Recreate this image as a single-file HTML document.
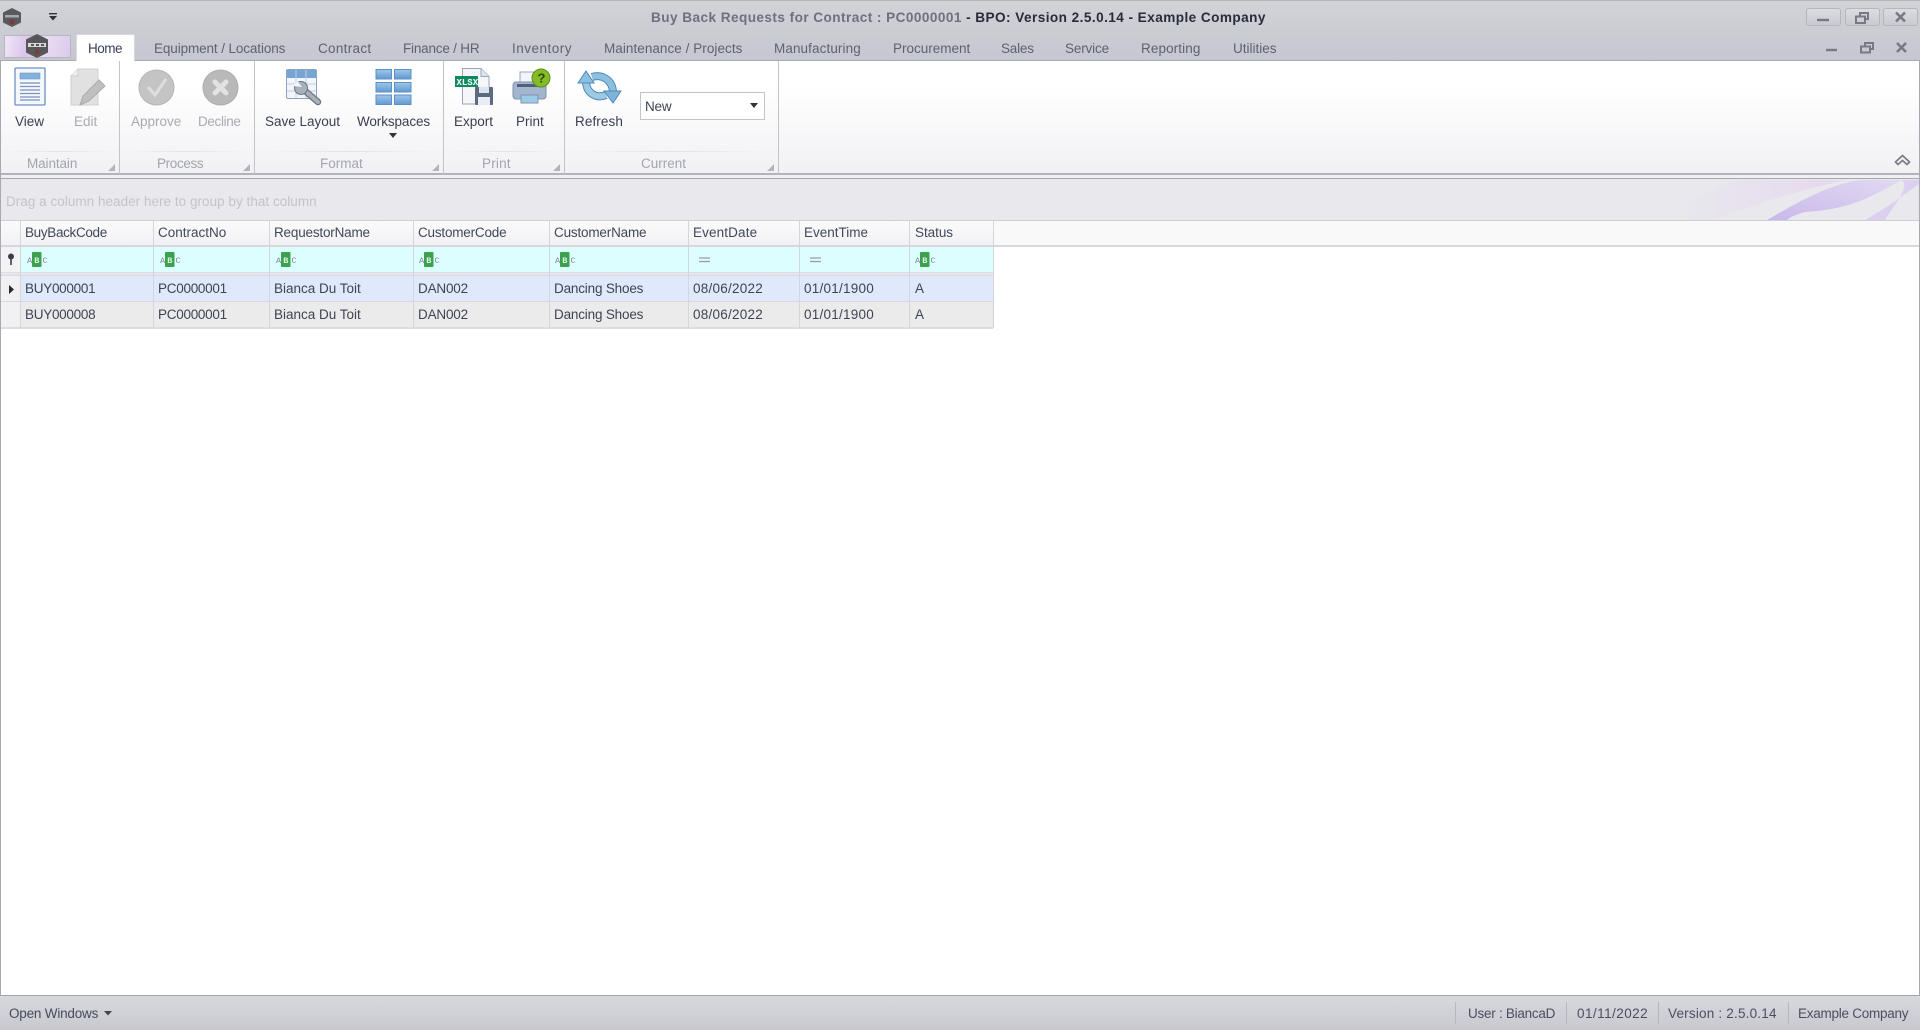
<!DOCTYPE html>
<html><head><meta charset="utf-8"><style>
html,body{margin:0;padding:0;width:1920px;height:1030px;overflow:hidden;background:#fff}
#r{position:relative;width:1920px;height:1030px;overflow:hidden;font-family:"Liberation Sans",sans-serif;font-size:13.5px;color:#3f4454;filter:blur(.35px)}
#r div,#r svg{position:absolute}
.t{white-space:nowrap;line-height:16px}
.tab{top:41px;color:#5d6273}
.lb{top:114px;color:#3a3f50}
.dis{color:#a9abb3}
.gl{top:156px;color:#a3a5ae}
.sep{top:61px;width:1px;height:113px;background:#c2c3c9}
.gline{top:151px;height:1px;background:linear-gradient(90deg,#f4f4f6,#e3e3e7,#f4f4f6)}
.corner{top:164px;width:0;height:0;border-left:7px solid transparent;border-bottom:7px solid #b4b5bb}
.c{color:#3f4454}
.v{width:1px;background:#d5d6dc}
.h{top:224.5px;color:#434858}
.r1{top:281px}.r2{top:307px}
.code{letter-spacing:-.27px}
.name{letter-spacing:-.18px}
.date{letter-spacing:.25px}
.winb{top:8px;height:16px;width:33px;border:1px solid #b5b6bd;border-radius:3px;background:linear-gradient(#dcdde1,#c9cad1)}
.st{top:1006px;color:#4a4f60}
.sv{top:1002px;width:1px;height:22px;background:#b6b7be}
</style></head><body><div id="r">

<div style="left:0;top:0;width:1920px;height:61px;background:linear-gradient(#d2d3d7,#c5c6cf);border-top:1px solid #b4b5ba;box-sizing:border-box"></div>
<div style="left:0;top:60px;width:1920px;height:1px;background:#a8a9b1"></div>

<svg style="left:2px;top:7px" width="20" height="21" viewBox="0 0 20 21"><polygon points="10,1 19,5.5 19,15.5 10,20 1,15.5 1,5.5" fill="#5a595e"/><rect x="3" y="8" width="14" height="2.5" fill="#a9a9ad"/><circle cx="10" cy="15" r="2.5" fill="#7a3b3b"/></svg>
<svg style="left:47px;top:12px" width="12" height="10"><rect x="2" y="1" width="8" height="1.4" fill="#333"/><polygon points="2,4 10,4 6,8.5" fill="#333"/></svg>

<div class="t" style="left:651px;top:10px;font-weight:bold;font-size:13.6px;color:#6d7080;letter-spacing:.44px">Buy Back Requests for Contract : PC0000001 <span style="color:#272b3a">- BPO: Version 2.5.0.14 - Example Company</span></div>

<div style="left:4px;top:35px;width:67px;height:23px;box-sizing:border-box;border:1px solid #b7b7c0;background:linear-gradient(100deg,#efe6f6,#d9c4ea 35%,#e9dcf3 60%,#dccaec)"></div>
<svg style="left:25px;top:33px" width="24" height="26" viewBox="0 0 24 26"><polygon points="12,1 23,6.5 23,19.5 12,25 1,19.5 1,6.5" fill="#57565b"/><rect x="3" y="10" width="18" height="4" fill="#d8d8da"/><rect x="6" y="11" width="3" height="2" fill="#57565b"/><rect x="11" y="11" width="3" height="2" fill="#57565b"/><rect x="16" y="11" width="3" height="2" fill="#57565b"/><circle cx="12" cy="19" r="2.5" fill="#7a3b3b"/></svg>

<div style="left:76px;top:34px;width:59px;height:28px;background:#fff;box-sizing:border-box;border:1px solid #d8d8dd;border-bottom:none;border-radius:2px 2px 0 0"></div>
<div class="t" style="left:88px;top:41px;color:#3a4058;letter-spacing:-.5px">Home</div>
<div class="t tab" style="left:154px;letter-spacing:-.11px">Equipment / Locations</div>
<div class="t tab" style="left:318px;letter-spacing:.3px">Contract</div>
<div class="t tab" style="left:403px;letter-spacing:-.2px">Finance / HR</div>
<div class="t tab" style="left:512px;letter-spacing:.5px">Inventory</div>
<div class="t tab" style="left:604px;letter-spacing:.05px">Maintenance / Projects</div>
<div class="t tab" style="left:774px;letter-spacing:.1px">Manufacturing</div>
<div class="t tab" style="left:893px">Procurement</div>
<div class="t tab" style="left:1001px;letter-spacing:-.2px">Sales</div>
<div class="t tab" style="left:1065px;letter-spacing:-.15px">Service</div>
<div class="t tab" style="left:1141px;letter-spacing:.1px">Reporting</div>
<div class="t tab" style="left:1233px">Utilities</div>

<div class="winb" style="left:1806px"></div><div class="winb" style="left:1845px"></div><div class="winb" style="left:1883px"></div>
<svg style="left:1800px;top:5px" width="120" height="50" viewBox="0 0 120 50" fill="none" stroke="#777985">
<path d="M17 15H29" stroke-width="2.4"/>
<path d="M56 11.5h9v6.5h-9z M60 11.5V8h8v6h-3" stroke-width="2"/>
<path d="M96 7.5l9 9M105 7.5l-9 9" stroke-width="2.6"/>
<path d="M26 45H37" stroke-width="2.4"/>
<path d="M61 41.5h9v6h-9z M65 41.5V38h8v6h-3" stroke-width="2"/>
<path d="M97 38l9 9M106 38l-9 9" stroke-width="2.6"/>
</svg>

<div style="left:1px;top:61px;width:1918px;height:113px;background:linear-gradient(#fff,#fff 20%,#f1f1f4)"></div>
<div style="left:0;top:173px;width:1920px;height:2px;background:#b3b4bb"></div>
<div style="left:0;top:175px;width:1920px;height:3px;background:#f0f0f3"></div>
<div style="left:0;top:178px;width:1920px;height:1px;background:#a5a6ae"></div>

<div class="sep" style="left:119px"></div><div class="sep" style="left:254px"></div><div class="sep" style="left:443px"></div><div class="sep" style="left:564px"></div><div class="sep" style="left:778px"></div>
<div class="gline" style="left:8px;width:104px"></div><div class="gline" style="left:128px;width:118px"></div><div class="gline" style="left:263px;width:172px"></div><div class="gline" style="left:452px;width:104px"></div><div class="gline" style="left:573px;width:197px"></div>
<div class="corner" style="left:108px"></div><div class="corner" style="left:243px"></div><div class="corner" style="left:432px"></div><div class="corner" style="left:553px"></div><div class="corner" style="left:767px"></div>

<div class="t gl" style="left:27px;letter-spacing:-.1px">Maintain</div>
<div class="t gl" style="left:157px;letter-spacing:-.35px">Process</div>
<div class="t gl" style="left:320px">Format</div>
<div class="t gl" style="left:482px;letter-spacing:.2px">Print</div>
<div class="t gl" style="left:641px">Current</div>

<div class="t lb" style="left:15px">View</div>
<div class="t lb dis" style="left:74px">Edit</div>
<div class="t lb dis" style="left:131px">Approve</div>
<div class="t lb dis" style="left:198px;letter-spacing:-.35px">Decline</div>
<div class="t lb" style="left:265px">Save Layout</div>
<div class="t lb" style="left:357px;letter-spacing:-.1px">Workspaces</div>
<div class="t lb" style="left:454px">Export</div>
<div class="t lb" style="left:516px">Print</div>
<div class="t lb" style="left:575px;letter-spacing:.1px">Refresh</div>
<svg style="left:388px;top:132px" width="10" height="7"><polygon points="1,1 9,1 5,6" fill="#333"/></svg>

<!-- View -->
<svg style="left:14px;top:67px" width="32" height="40" viewBox="0 0 32 40"><rect x="1" y="1" width="30" height="37" rx="1" fill="#f4f7fc" stroke="#6f8fc4" stroke-width="1.3"/><rect x="6" y="6" width="20" height="6" fill="#83b2de" stroke="#6d97c3" stroke-width=".6"/><path d="M6 16H26M6 19.5H26M6 23H26M6 26.5H26M6 30H26M6 33H26" stroke="#7b93bb" stroke-width="1.3"/></svg>
<!-- Edit -->
<svg style="left:70px;top:68px" width="36" height="40" viewBox="0 0 36 40"><path d="M1 8L8 1H28V37H1Z" fill="#e1e1e1" stroke="#cfcfcf"/><path d="M1 8H8V1" fill="#eee" stroke="#cfcfcf"/><path d="M10 37L13 28 29 12 35 18 19 33Z" fill="#bfbfbf" stroke="#ababab"/></svg>
<!-- Approve -->
<svg style="left:138px;top:69px" width="37" height="37" viewBox="0 0 37 37"><circle cx="18.5" cy="18.5" r="17.5" fill="#c4c4c4" stroke="#b6b6b6"/><path d="M10 18l7 8L28 10" fill="none" stroke="#dedede" stroke-width="3"/></svg>
<!-- Decline -->
<svg style="left:202px;top:69px" width="37" height="37" viewBox="0 0 37 37"><circle cx="18.5" cy="18.5" r="17.5" fill="#b9b9b9" stroke="#adadad"/><path d="M13 13L24 24M24 13L13 24" stroke="#e2e2e2" stroke-width="5" stroke-linecap="round"/></svg>
<!-- Save layout -->
<svg style="left:285px;top:68px" width="38" height="38" viewBox="0 0 38 38"><rect x="1.5" y="1.5" width="30" height="29" rx="1.5" fill="#f2f5fa" stroke="#8ba3c4"/><rect x="2" y="2" width="29" height="8" fill="#76a5d3"/><path d="M11 2V30M21 2V30M2 16H31M2 23H31" stroke="#c0cee0" stroke-width="1"/><path d="M19 22L33 34" stroke="#6d7582" stroke-width="6.5" stroke-linecap="round"/><path d="M19 22L33 34" stroke="#a8b0bb" stroke-width="4" stroke-linecap="round"/><circle cx="16" cy="20" r="6.5" fill="#a8b0bb" stroke="#6d7582"/><path d="M17 19L12.5 13 8 18Z" fill="#f2f5fa"/></svg>
<!-- Workspaces -->
<svg style="left:375px;top:68px" width="38" height="38" viewBox="0 0 38 38" stroke="#5d90c3"><defs><linearGradient id="w" x1="0" y1="0" x2="0" y2="1"><stop offset="0" stop-color="#a0c6e8"/><stop offset="1" stop-color="#5f9ad3"/></linearGradient></defs><g fill="url(#w)"><rect x="1" y="1.5" width="15.5" height="9.5"/><rect x="19.5" y="1.5" width="16.5" height="9.5"/><rect x="1" y="14.5" width="15.5" height="9.5"/><rect x="19.5" y="14.5" width="16.5" height="9.5"/><rect x="1" y="27" width="15.5" height="9.5"/><rect x="19.5" y="27" width="16.5" height="9.5"/></g></svg>
<!-- Export -->
<svg style="left:455px;top:67px" width="40" height="40" viewBox="0 0 40 40"><path d="M7.5 1.5H26L34 9.5V37H7.5Z" fill="#f4f6fa" stroke="#9aa7bb"/><path d="M26 1.5V9.5H34" fill="#dfe4ec" stroke="#9aa7bb"/><rect x="0" y="9" width="23" height="11" fill="#0d8a5e"/><text x="1.5" y="18" font-family="Liberation Mono,monospace" font-size="9" font-weight="bold" fill="#fff">XLSX</text><rect x="20" y="20" width="18" height="18" rx="1" fill="#5a6a80"/><rect x="24" y="20" width="10" height="6" fill="#dde3ec"/><rect x="23" y="30" width="12" height="8" fill="#e9edf3"/></svg>
<!-- Print -->
<svg style="left:511px;top:67px" width="42" height="40" viewBox="0 0 42 40"><rect x="9" y="5" width="20" height="14" fill="#f2f5f9" stroke="#9aa7bb"/><rect x="2" y="15" width="33" height="17" rx="3" fill="#a4b6cd" stroke="#7f93ad"/><rect x="6" y="17" width="25" height="3" fill="#4e5f78"/><rect x="10" y="28" width="17" height="8" fill="#9ccbe8" stroke="#7f93ad"/><circle cx="30" cy="11" r="9" fill="#84bb26" stroke="#5e9012"/><text x="26.5" y="15.5" font-family="Liberation Sans" font-size="13" font-weight="bold" fill="#2d4a05">?</text></svg>
<!-- Refresh -->
<svg style="left:572px;top:66px" width="56" height="42" viewBox="0 0 56 42" fill="none">
<path d="M14 15C14 27 24 33 34 29" stroke="#4f8ab5" stroke-width="8"/><path d="M14 15C14 27 24 33 34 29" stroke="#9cc9e6" stroke-width="6"/>
<polygon points="14,5 6,17 22,17" fill="#8cc0e2" stroke="#4f8ab5"/>
<path d="M41 27C41 14 30 8 20 11" stroke="#4f8ab5" stroke-width="8"/><path d="M41 27C41 14 30 8 20 11" stroke="#8cbfe0" stroke-width="6"/>
<polygon points="41,37 32,25 49,25" fill="#7fb4da" stroke="#4f8ab5"/></svg>

<!-- combo -->
<div style="left:640px;top:92px;width:125px;height:28px;box-sizing:border-box;background:#fff;border:1px solid #c3c4ca"></div>
<div class="t" style="left:645px;top:99px;color:#3f4454;letter-spacing:-.2px">New</div>
<svg style="left:749px;top:102px" width="10" height="7"><polygon points="1,1 9,1 5,6" fill="#333"/></svg>

<!-- chevron -->
<svg style="left:1894px;top:154px" width="17" height="14" viewBox="0 0 17 14" fill="none" stroke="#777a82" stroke-width="1.7"><path d="M1.5 8L8.5 1.5 15.5 8 13 10.5 8.5 6.5 4 10.5Z"/></svg>

<!-- group panel -->
<div style="left:1px;top:179px;width:1918px;height:41px;background:#e9e9ed;overflow:hidden"></div>
<svg style="left:1640px;top:179px" width="279" height="41" viewBox="0 0 279 41"><defs><linearGradient id="g1" x1="0" x2="1"><stop offset="0" stop-color="#e9e9ed"/><stop offset="1" stop-color="#e6d8ee"/></linearGradient><linearGradient id="g2" x1="0" x2="1" y1="1" y2="0"><stop offset="0" stop-color="#c9b8ea"/><stop offset="1" stop-color="#e2d9f2"/></linearGradient></defs><path d="M70 41C110 28 160 10 208 1H95C60 15 30 30 30 41Z" fill="url(#g1)"/><path d="M127 41C160 22 190 5 220 1H262C235 15 215 30 165 33 155 36 150 38 147 41Z" fill="url(#g2)"/><path d="M225 41C245 30 265 15 279 5V1H262C270 8 255 25 245 41Z" fill="#dccff0"/></svg>
<div class="t" style="left:6px;top:194px;color:#c3c4ca;letter-spacing:.03px">Drag a column header here to group by that column</div>
<div style="left:1px;top:220px;width:1918px;height:1px;background:#cfd0d6"></div>

<!-- grid -->
<div style="left:1px;top:221px;width:1918px;height:25px;background:#f9f9fa"></div>
<div style="left:1px;top:221px;width:992px;height:25px;background:linear-gradient(#fbfbfc,#f1f1f4)"></div>
<div style="left:1px;top:245px;width:1918px;height:2px;background:#d7d8dd"></div>
<div style="left:21px;top:247px;width:972px;height:25px;background:#dcfefe"></div>
<div style="left:1px;top:247px;width:20px;height:25px;background:#f3f3f5"></div>
<div style="left:1px;top:272px;width:992px;height:4px;background:linear-gradient(#d5d6dc,#eeeef1 40%,#d5d6dc)"></div>
<div style="left:21px;top:276px;width:972px;height:26px;background:#e0e8fb"></div>
<div style="left:21px;top:302px;width:972px;height:26px;background:#ebebeb"></div>
<div style="left:1px;top:276px;width:20px;height:52px;background:#f1f1f3"></div>
<div style="left:1px;top:301px;width:992px;height:1px;background:#d8d9de"></div>
<div style="left:1px;top:327px;width:992px;height:2px;background:#dcdcdf"></div>

<div class="v" style="left:20px;top:221px;height:107px"></div>
<div class="v" style="left:153px;top:221px;height:107px"></div>
<div class="v" style="left:269px;top:221px;height:107px"></div>
<div class="v" style="left:413px;top:221px;height:107px"></div>
<div class="v" style="left:549px;top:221px;height:107px"></div>
<div class="v" style="left:688px;top:221px;height:107px"></div>
<div class="v" style="left:799px;top:221px;height:107px"></div>
<div class="v" style="left:909px;top:221px;height:107px"></div>
<div class="v" style="left:993px;top:221px;height:107px"></div>

<div class="t h" style="left:25px;letter-spacing:-.33px">BuyBackCode</div>
<div class="t h" style="left:158px">ContractNo</div>
<div class="t h" style="left:274px;letter-spacing:-.19px">RequestorName</div>
<div class="t h" style="left:418px;letter-spacing:-.2px">CustomerCode</div>
<div class="t h" style="left:554px;letter-spacing:-.18px">CustomerName</div>
<div class="t h" style="left:693px;letter-spacing:.13px">EventDate</div>
<div class="t h" style="left:804px">EventTime</div>
<div class="t h" style="left:915px;letter-spacing:-.05px">Status</div>

<svg style="left:6px;top:253px" width="10" height="13" viewBox="0 0 10 13"><circle cx="5" cy="3.5" r="3" fill="#3a3e4a"/><path d="M5 5V12" stroke="#3a3e4a" stroke-width="1.6"/></svg>
<svg style="left:8px;top:284px" width="7" height="11"><polygon points="1,1 6,5.5 1,10" fill="#252833"/></svg>

<svg style="left:26px;top:251px" width="22" height="17"><rect x="6" y="1" width="9.5" height="15" rx="1" fill="#3ba14f"/><text x="1" y="12" font-family="Liberation Mono,monospace" font-size="8.5" fill="#85878d">A</text><text x="8.3" y="12" font-family="Liberation Mono,monospace" font-size="8.5" font-weight="bold" fill="#dff5e3">B</text><text x="16.5" y="12" font-family="Liberation Mono,monospace" font-size="8.5" fill="#85878d">C</text></svg>
<svg style="left:159px;top:251px" width="22" height="17"><rect x="6" y="1" width="9.5" height="15" rx="1" fill="#3ba14f"/><text x="1" y="12" font-family="Liberation Mono,monospace" font-size="8.5" fill="#85878d">A</text><text x="8.3" y="12" font-family="Liberation Mono,monospace" font-size="8.5" font-weight="bold" fill="#dff5e3">B</text><text x="16.5" y="12" font-family="Liberation Mono,monospace" font-size="8.5" fill="#85878d">C</text></svg>
<svg style="left:275px;top:251px" width="22" height="17"><rect x="6" y="1" width="9.5" height="15" rx="1" fill="#3ba14f"/><text x="1" y="12" font-family="Liberation Mono,monospace" font-size="8.5" fill="#85878d">A</text><text x="8.3" y="12" font-family="Liberation Mono,monospace" font-size="8.5" font-weight="bold" fill="#dff5e3">B</text><text x="16.5" y="12" font-family="Liberation Mono,monospace" font-size="8.5" fill="#85878d">C</text></svg>
<svg style="left:418px;top:251px" width="22" height="17"><rect x="6" y="1" width="9.5" height="15" rx="1" fill="#3ba14f"/><text x="1" y="12" font-family="Liberation Mono,monospace" font-size="8.5" fill="#85878d">A</text><text x="8.3" y="12" font-family="Liberation Mono,monospace" font-size="8.5" font-weight="bold" fill="#dff5e3">B</text><text x="16.5" y="12" font-family="Liberation Mono,monospace" font-size="8.5" fill="#85878d">C</text></svg>
<svg style="left:554px;top:251px" width="22" height="17"><rect x="6" y="1" width="9.5" height="15" rx="1" fill="#3ba14f"/><text x="1" y="12" font-family="Liberation Mono,monospace" font-size="8.5" fill="#85878d">A</text><text x="8.3" y="12" font-family="Liberation Mono,monospace" font-size="8.5" font-weight="bold" fill="#dff5e3">B</text><text x="16.5" y="12" font-family="Liberation Mono,monospace" font-size="8.5" fill="#85878d">C</text></svg>
<svg style="left:914px;top:251px" width="22" height="17"><rect x="6" y="1" width="9.5" height="15" rx="1" fill="#3ba14f"/><text x="1" y="12" font-family="Liberation Mono,monospace" font-size="8.5" fill="#85878d">A</text><text x="8.3" y="12" font-family="Liberation Mono,monospace" font-size="8.5" font-weight="bold" fill="#dff5e3">B</text><text x="16.5" y="12" font-family="Liberation Mono,monospace" font-size="8.5" fill="#85878d">C</text></svg>
<svg style="left:698px;top:257px" width="14" height="6"><path d="M1 1H12M1 4.5H12" stroke="#9a9ca3" stroke-width="1.2"/></svg>
<svg style="left:809px;top:257px" width="14" height="6"><path d="M1 1H12M1 4.5H12" stroke="#9a9ca3" stroke-width="1.2"/></svg>

<div class="t c r1 code" style="left:25px">BUY000001</div><div class="t c r1 code" style="left:158px">PC0000001</div><div class="t c r1" style="left:274px">Bianca Du Toit</div><div class="t c r1 name" style="left:418px">DAN002</div><div class="t c r1 name" style="left:554px">Dancing Shoes</div><div class="t c r1 date" style="left:693px">08/06/2022</div><div class="t c r1 date" style="left:804px">01/01/1900</div><div class="t c r1" style="left:915px">A</div>
<div class="t c r2 code" style="left:25px">BUY000008</div><div class="t c r2 code" style="left:158px">PC0000001</div><div class="t c r2" style="left:274px">Bianca Du Toit</div><div class="t c r2 name" style="left:418px">DAN002</div><div class="t c r2 name" style="left:554px">Dancing Shoes</div><div class="t c r2 date" style="left:693px">08/06/2022</div><div class="t c r2 date" style="left:804px">01/01/1900</div><div class="t c r2" style="left:915px">A</div>

<!-- borders -->
<div style="left:0;top:61px;width:1px;height:934px;background:#a9aab1"></div>
<div style="left:1919px;top:61px;width:1px;height:934px;background:#a9aab1"></div>

<!-- status -->
<div style="left:0;top:995px;width:1920px;height:35px;background:linear-gradient(#d8d9dd,#c8c9d0);border-top:1px solid #a4a5ad;box-sizing:border-box"></div>
<div class="t st" style="left:9px;color:#464b5c;letter-spacing:-.2px">Open Windows</div>
<svg style="left:103px;top:1010px" width="10" height="7"><polygon points="1,1 9,1 5,5.5" fill="#444"/></svg>
<div class="sv" style="left:1455px"></div><div class="sv" style="left:1566px"></div><div class="sv" style="left:1658px"></div><div class="sv" style="left:1788px"></div>
<div class="t st" style="left:1468px;letter-spacing:-.26px">User : BiancaD</div>
<div class="t st" style="left:1577px;letter-spacing:.45px">01/11/2022</div>
<div class="t st" style="left:1668px;letter-spacing:.2px">Version : 2.5.0.14</div>
<div class="t st" style="left:1798px;letter-spacing:-.25px">Example Company</div>

</div></body></html>
